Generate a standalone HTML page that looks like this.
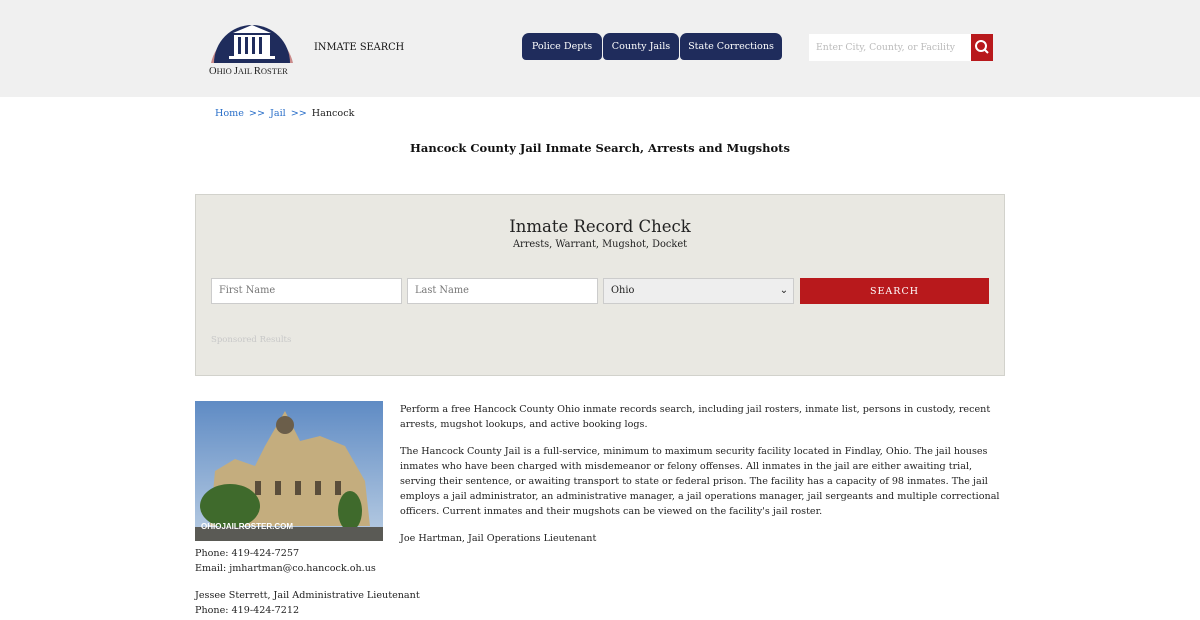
<!DOCTYPE html>
<html><head><meta charset="utf-8"><style>
*{box-sizing:border-box;margin:0;padding:0}
body{width:1200px;height:620px;overflow:hidden;background:#fff;font-family:"DejaVu Serif","Liberation Serif",serif;color:#222;font-size:9.6px}
.hdr{height:97px;background:#f0f0f0;position:relative}
.logo{position:absolute;left:207px;top:18px}
.ins{position:absolute;left:314px;top:42px;font-size:9.8px;color:#111}
.nav{position:absolute;left:522px;top:33px;height:27px}
.nav div{position:absolute;top:0;background:#1f2c5c;color:#fff;height:27px;line-height:27px;text-align:center;border-radius:7px 7px 4px 4px;font-size:9.6px}
.srch{position:absolute;left:809px;top:34px;width:162px;height:27px;background:#fff;color:#bbb;font-size:9.3px;line-height:27px;padding-left:7px}
.sbtn{position:absolute;left:971px;top:34px;width:22px;height:27px;background:#b8191c}
.bc{position:absolute;left:215px;top:108px;font-size:9.6px}
.bc a{color:#2a6fc9;text-decoration:none}
.bc span{margin:0 5px}
h1{position:absolute;left:0;width:1200px;top:141px;text-align:center;font-size:11.5px;font-weight:bold;color:#111}
.box{position:absolute;left:195px;top:194px;width:810px;height:182px;background:#e9e8e2;border:1px solid #d2d2cc}
.box h2{text-align:center;font-weight:normal;font-size:16.5px;margin-top:22px;color:#222}
.box .sub{text-align:center;font-size:9.8px;margin-top:3px}
.inp{position:absolute;top:83px;height:26px;background:#fff;border:1px solid #ccc;font-size:9.8px;color:#777;line-height:24px;padding-left:7px}
.btn{position:absolute;left:604px;top:83px;width:189px;height:26px;background:#b8191c;color:#fff;text-align:center;line-height:27px;font-size:9.5px;letter-spacing:1px}
.spon{position:absolute;left:15px;top:140px;font-size:8.5px;color:#c8c8c8}
.img{position:absolute;left:195px;top:401px;width:188px;height:140px}
.txt{position:absolute;left:400px;top:402px;width:600px;line-height:15px}
.txt p{margin-bottom:12px}
.left{position:absolute;left:195px;top:546px;line-height:15px}
</style></head><body>
<div class="hdr">
 <div class="logo"><svg width="92" height="60" viewBox="0 0 92 60">
  <path d="M4 45 A42 42 0 0 1 86 45 Z" fill="#c98a8a"/>
  <path d="M7 45 A38 38 0 0 1 83 45 Z" fill="#1f2c5c"/>
  <polygon points="26,15 45,7 64,15" fill="#fff"/>
  <rect x="27" y="17" width="36" height="21" fill="#fff"/>
  <g fill="#1f2c5c"><rect x="31" y="19" width="3" height="17"/><rect x="38" y="19" width="3" height="17"/><rect x="45" y="19" width="3" height="17"/><rect x="52" y="19" width="3" height="17"/></g>
  <rect x="22" y="38" width="46" height="3" fill="#fff"/>
  <text x="2" y="56" font-family="Liberation Serif,serif" font-size="10.5" fill="#222">O<tspan font-size="8.5">HIO </tspan>J<tspan font-size="8.5">AIL </tspan>R<tspan font-size="8.5">OSTER</tspan></text>
 </svg></div>
 <div class="ins">INMATE SEARCH</div>
 <div class="nav"><div style="left:0;width:80px">Police Depts</div><div style="left:81px;width:76px">County Jails</div><div style="left:158px;width:102px">State Corrections</div></div>
 <div class="srch">Enter City, County, or Facility</div>
 <div class="sbtn"><svg width="22" height="27"><circle cx="10" cy="12" r="5" stroke="#fff" stroke-width="2" fill="none"/><line x1="14" y1="16" x2="17" y2="19" stroke="#fff" stroke-width="2"/></svg></div>
</div>
<div class="bc"><a>Home</a><span><a>&gt;&gt;</a></span><a>Jail</a><span><a>&gt;&gt;</a></span>Hancock</div>
<h1>Hancock County Jail Inmate Search, Arrests and Mugshots</h1>
<div class="box">
 <h2>Inmate Record Check</h2>
 <div class="sub">Arrests, Warrant, Mugshot, Docket</div>
 <div class="inp" style="left:15px;width:191px">First Name</div>
 <div class="inp" style="left:211px;width:191px">Last Name</div>
 <div class="inp" style="left:407px;width:191px;background:#eee;color:#222">Ohio<span style="float:right;margin-right:5px">⌄</span></div>
 <div class="btn">SEARCH</div>
 <div class="spon">Sponsored Results</div>
</div>
<div class="img"><svg width="188" height="140">
<defs><linearGradient id="s" x1="0" y1="0" x2="0" y2="1"><stop offset="0" stop-color="#5f8bc4"/><stop offset="1" stop-color="#b9cde3"/></linearGradient></defs>
<rect width="188" height="140" fill="url(#s)"/>
<polygon points="20,70 40,58 60,65 70,45 90,10 105,40 125,35 150,45 170,80 175,125 15,125" fill="#c4ad7e"/>
<circle cx="90" cy="24" r="9" fill="#6b5e4a"/>
<g fill="#5a4d3a"><rect x="60" y="80" width="6" height="14"/><rect x="80" y="80" width="6" height="14"/><rect x="100" y="80" width="6" height="14"/><rect x="120" y="80" width="6" height="14"/><rect x="140" y="80" width="6" height="14"/></g>
<ellipse cx="35" cy="105" rx="30" ry="22" fill="#3f6a2c"/>
<ellipse cx="155" cy="110" rx="12" ry="20" fill="#3f6a2c"/>
<rect x="0" y="126" width="188" height="14" fill="#5a5a55"/>
<text x="6" y="128" font-size="8" fill="#fff" font-family="Liberation Sans" font-weight="bold">OHIOJAILROSTER.COM</text></svg></div>
<div class="txt">
<p>Perform a free Hancock County Ohio inmate records search, including jail rosters, inmate list, persons in custody, recent arrests, mugshot lookups, and active booking logs.</p>
<p>The Hancock County Jail is a full-service, minimum to maximum security facility located in Findlay, Ohio. The jail houses inmates who have been charged with misdemeanor or felony offenses. All inmates in the jail are either awaiting trial, serving their sentence, or awaiting transport to state or federal prison. The facility has a capacity of 98 inmates. The jail employs a jail administrator, an administrative manager, a jail operations manager, jail sergeants and multiple correctional officers. Current inmates and their mugshots can be viewed on the facility's jail roster.</p>
<p>Joe Hartman, Jail Operations Lieutenant</p>
</div>
<div class="left">Phone: 419-424-7257<br>Email: jmhartman@co.hancock.oh.us<br><div style="height:12px"></div>Jessee Sterrett, Jail Administrative Lieutenant<br>Phone: 419-424-7212</div>
</body></html>
